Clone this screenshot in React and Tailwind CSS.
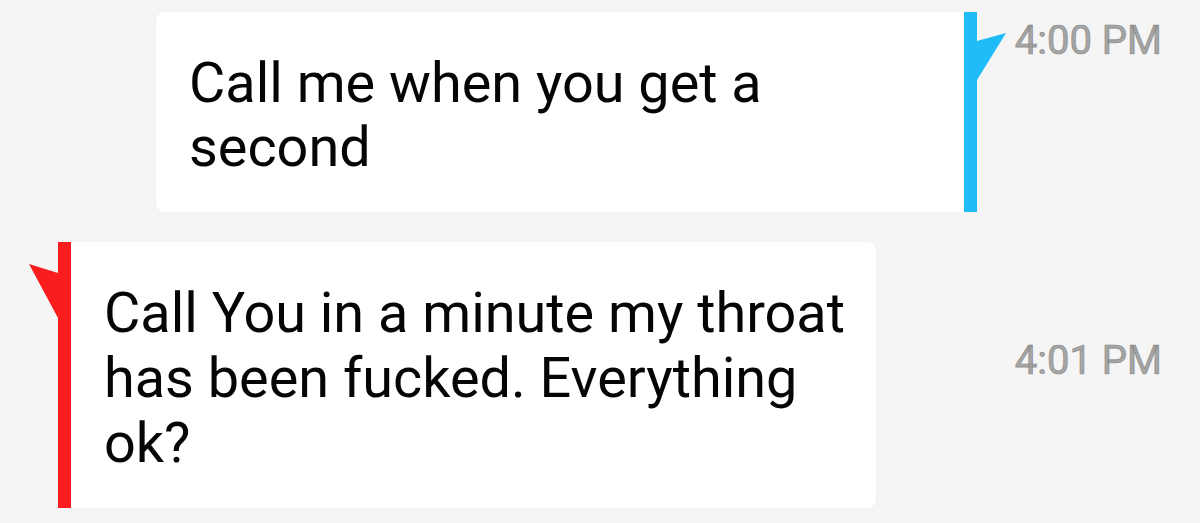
export default function App() {
  return (
    <div className="w-[1200px] h-[523px] bg-[#f5f5f5] overflow-hidden font-['Roboto',sans-serif] text-[#050505]">
      {/* outgoing message */}
      <div className="flex items-start pt-[12px] pl-[156px]">
        <div className="w-[808px] h-[200px] bg-white rounded-l-[8px] shadow-[0_0_2px_rgba(0,0,0,0.06)] pl-[33px] pt-[39px] text-[55.8px] leading-[64px]">
          Call me when you get a
          <br />
          second
        </div>
        <div className="w-[13px] h-[200px] bg-[#20bcf8]" />
        <svg width="30" height="70" viewBox="0 0 30 70" className="shrink-0">
          <polygon points="0,29 29,21 0,68" fill="#20bcf8" />
        </svg>
        <div className="ml-auto pr-[38px] mt-[9px] text-[40px] leading-[40px] text-[#a6a6a6] [-webkit-text-stroke:0.7px_#888888] [text-shadow:0_1px_0_#ffffff]">
          4:00 PM
        </div>
      </div>

      {/* incoming message */}
      <div className="flex items-start mt-[30px] pl-[28px]">
        <svg width="30" height="80" viewBox="0 0 30 80" className="shrink-0">
          <polygon points="1,22 30,31 30,76" fill="#fb1d1d" />
        </svg>
        <div className="w-[13px] h-[266px] bg-[#fb1d1d]" />
        <div className="w-[805px] h-[266px] bg-white rounded-r-[8px] shadow-[0_0_2px_rgba(0,0,0,0.06)] pl-[33px] pt-[39px] text-[55.8px] leading-[65px]">
          Call You in a minute my throat
          <br />
          has been fucked. Everything
          <br />
          ok?
        </div>
        <div className="ml-auto pr-[38px] mt-[99px] text-[40px] leading-[40px] text-[#a6a6a6] [-webkit-text-stroke:0.7px_#888888] [text-shadow:0_1px_0_#ffffff]">
          4:01 PM
        </div>
      </div>
    </div>
  );
}
